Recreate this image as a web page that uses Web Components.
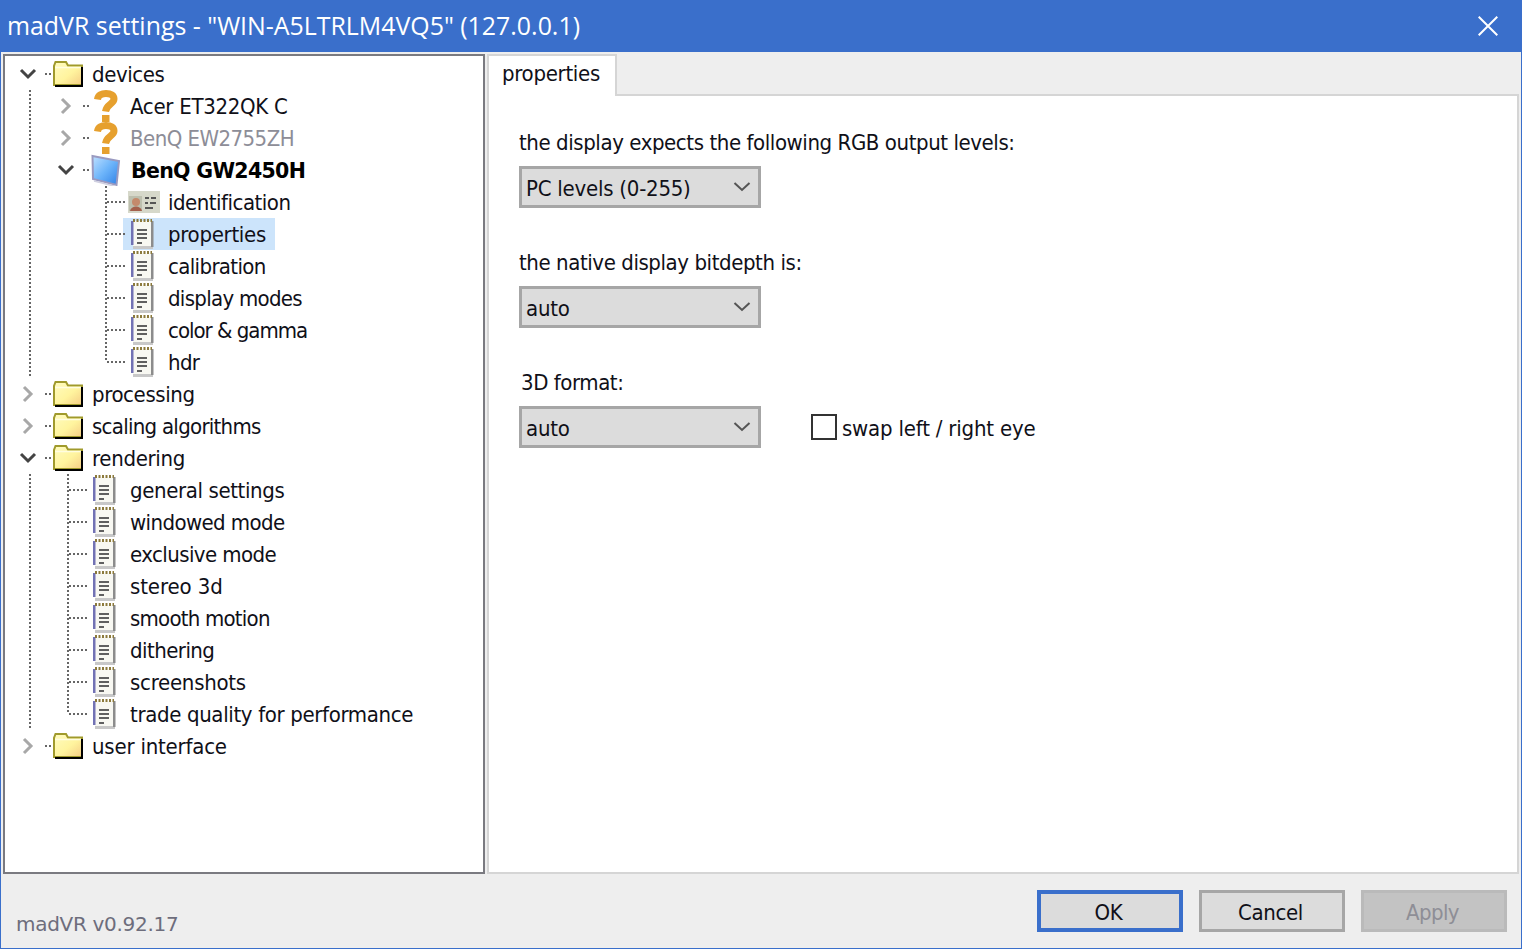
<!DOCTYPE html>
<html><head><meta charset="utf-8"><title>madVR settings</title>
<style>
html,body{margin:0;padding:0;background:#eee;}
body{width:1522px;height:949px;overflow:hidden;font-family:"DejaVu Sans","Noto Sans",sans-serif;font-stretch:condensed;font-size:22px;color:#101018;}
</style></head><body>
<template id="t-icon-folder"><svg width="30" height="26" viewBox="0 0 30 26"><path d="M1 24 V5 L2.500 1 H13 L15 4.500 H29 V24Z" fill="url(#f)" stroke="#a09a2c" stroke-width="2"/><path d="M2 6.500H28" stroke="#fffde0" stroke-width="1.500"/><path d="M2 25H29V6" fill="none" stroke="#000" stroke-width="2"/><defs><linearGradient id="f" x1="0" y1="0" x2="1" y2="1"><stop offset="0" stop-color="#fffcc0"/><stop offset=".55" stop-color="#fff49e"/><stop offset="1" stop-color="#f4cc84"/></linearGradient></defs></svg></template>
<template id="t-icon-q"><svg width="26" height="32" viewBox="0 0 26 32"><path d="M4.500 9.500 C5 5 9 3.500 13 3.500 C18 3.500 21 5.500 21 9 C21 14 13.500 14 12.500 21.500" fill="none" stroke="#e6a02e" stroke-width="7"/><rect x="9" y="25" width="7.500" height="7" fill="#e6a02e"/></svg></template>
<template id="t-icon-mon"><svg width="30" height="32" viewBox="0 0 30 32"><path d="M1.500 2 L28 7 L25.500 31 L2 25Z" fill="url(#m)" stroke="#9a9ac0" stroke-width="2"/><path d="M3 27 L25 32.500" stroke="#cfcfe0" stroke-width="1.500"/><defs><linearGradient id="m" x1="0" y1="0" x2="1" y2="1"><stop offset="0" stop-color="#bfe0ff"/><stop offset=".5" stop-color="#6cb4fa"/><stop offset="1" stop-color="#2f80e6"/></linearGradient></defs></svg></template>
<template id="t-icon-note"><svg width="26" height="32" viewBox="0 0 26 32"><rect x="2" y="28" width="20" height="3" fill="#c8c8c8"/><rect x="20" y="3" width="2.500" height="26" fill="#8c8c8c"/><rect x="2" y="3" width="18" height="25" fill="#f8f8f2"/><rect x="0" y="3" width="2.500" height="24" fill="#7272b4"/><path d="M2 2.500H21" stroke="#8c7a3c" stroke-width="3" stroke-dasharray="2 1.500"/><path d="M6 12H16M6 16H16M6 20H16M6 25H11" stroke="#606060" stroke-width="2"/></svg></template>
<template id="t-icon-id"><svg width="32" height="22" viewBox="0 0 32 22" style="filter:blur(.4px)"><rect width="32" height="22" fill="#d6d8ca"/><rect x="1" y="5" width="13" height="15" fill="#bcbfae"/><circle cx="8" cy="11" r="4" fill="#c48a6c"/><path d="M2 20 C3 14 13 14 14 20Z" fill="#a4604c"/><path d="M17 7h4M23 7h5M17 12h3M22 12h6M17 17h8" stroke="#555" stroke-width="2"/></svg></template>

<template id="t-tree-row"><style>
:host{display:flex;height:32px;position:relative;align-items:stretch;}
.c{width:38px;flex:none;position:relative;height:32px;}
.v{position:absolute;left:18px;top:0;bottom:0;width:2px;background:repeating-linear-gradient(to bottom,#666 0 2px,transparent 2px 4px);}
.v.half{bottom:16px;}
.v.tail{bottom:2px;}
.h{position:absolute;left:20px;width:20px;top:15px;height:2px;background:repeating-linear-gradient(to right,#666 0 2px,transparent 2px 4px);}
.s{position:absolute;left:34px;width:6px;top:15px;height:2px;background:repeating-linear-gradient(to right,#666 0 2px,transparent 2px 4px);}
.chev{position:absolute;left:8px;top:7px;width:18px;height:18px;}
.ico{width:38px;flex:none;display:flex;align-items:center;justify-content:center;height:32px;}
.lab{display:block;line-height:32px;padding:0 9px 0 5px;white-space:nowrap;position:relative;top:1px;}
.sel{display:flex;align-items:stretch;margin-left:-2px;padding-left:2px;}
:host([sel]) .sel{background:#cce4fb;}
:host([dim]) .lab{color:#8d8d97;}
:host([bold]) .lab{font-stretch:normal;font-weight:700;font-size:20.500px;letter-spacing:-.68px;color:#000;left:1px;}
</style><span id="g" style="display:contents"></span><span class="sel"><span class="ico" id="i"></span><span class="lab"><slot></slot></span></span></template>

<template id="t-combo"><style>
:host{display:flex;align-items:center;width:242px;height:42px;box-sizing:border-box;border:3px solid #a6a6a6;background:#dcdcdc;padding:0 7px 0 4px;justify-content:space-between;}
svg{flex:none}
span{position:relative;top:1px}
</style><span><slot></slot></span><svg width="18" height="12" viewBox="0 0 18 12"><path d="M1.500 2 L9 9 L16.500 2" fill="none" stroke="#555" stroke-width="2"/></svg></template>

<template id="t-btn"><style>
:host{display:flex;align-items:center;justify-content:center;width:146px;height:42px;box-sizing:border-box;border:3px solid #a6a6a6;background:#dcdcdc;padding-right:3px;}
:host([def]){border:4px solid #3a6fcb;}
:host([off]){background:#c3c3c3;border-color:#bababa;color:#8e8e96;}
span{position:relative;top:1px}
</style><span><slot></slot></span></template>

<template id="t-field"><style>
:host{display:block;height:120px;}
.l{display:block;line-height:32px;height:32px;margin-left:var(--ll,0);position:relative;top:1px;margin-bottom:8px}
.r{display:flex;align-items:center;gap:50px;}
</style><span class="l"><slot name="label"></slot></span><div class="r"><slot></slot></div></template>

<template id="t-check"><style>
:host{display:flex;align-items:center;gap:5px;}
i{display:block;width:26px;height:26px;box-sizing:border-box;border:2px solid #333;background:#fff;}
span{position:relative;top:1px}
</style><i></i><span><slot></slot></span></template>

<template id="t-title"><style>
:host{display:flex;flex:none;height:52px;background:#3a6fcb;color:#fff;align-items:center;justify-content:space-between;padding:0 23px 0 6px;font-family:"Open Sans","Noto Sans",sans-serif;font-stretch:normal;font-size:24.900px;}
span{position:relative;top:-1px;}
svg{display:block}
</style><span><slot></slot></span><svg width="20" height="20" viewBox="0 0 20 20"><path d="M0.700 0.700L19.300 19.300M19.300 0.700L0.700 19.300" stroke="#fff" stroke-width="2"/></svg></template>

<template id="t-window"><style>
:host{display:flex;flex-direction:column;width:1522px;height:949px;box-sizing:border-box;border:1px solid #3a6fcb;border-top:0;background:#eee;}
.main{display:flex;flex:none;gap:2px;height:820px;padding:2px 1px 0 2px;}
.foot{display:flex;flex:1;align-items:flex-start;justify-content:space-between;padding:16px 14px 0 15px;}
</style><slot name="title"></slot><div class="main"><slot name="tree"></slot><slot name="tabs"></slot></div><div class="foot"><slot name="version"></slot><slot name="buttons"></slot></div></template>

<template id="t-tree"><style>
:host{display:block;flex:none;width:482px;height:820px;box-sizing:border-box;border:2px solid #7a7a80;background:#fff;padding:2px 0 0 6px;overflow:hidden;}
</style><slot></slot></template>

<template id="t-tabs"><style>
:host{display:flex;flex-direction:column;flex:none;width:1032px;height:820px;}
.tab{display:block;width:130px;height:42px;box-sizing:border-box;flex:none;background:#fff;border:2px solid #d5d5d5;border-bottom:0;line-height:36px;padding-left:13px;position:relative;z-index:1;margin-bottom:-2px;}
.body{flex:1;background:#fff;border:2px solid #d5d5d5;padding:30px 0 0 30px;}
</style><span class="tab"><slot name="tab"></slot></span><div class="body"><slot></slot></div></template>

<template id="t-btns"><style>:host{display:flex;gap:16px;}</style><slot></slot></template>
<template id="t-ver"><style>:host{display:block;margin-top:18px;font-stretch:normal;font-size:20px;letter-spacing:-.3px;color:#6d6d7c;line-height:32px;}</style><slot></slot></template>

<script>
function simple(tag,tid){
  customElements.define(tag,class extends HTMLElement{
    constructor(){super();const r=this.attachShadow({mode:"open"});r.appendChild(document.getElementById(tid).content.cloneNode(true));}
  });
}
["window","title","tree","tabs","combo","btn","field","check","btns","ver"].forEach(n=>simple("mv-"+n,"t-"+n));
const CH={open:'<svg class="chev" viewBox="0 0 18 18"><path d="M2 5L9 12L16 5" fill="none" stroke="#444" stroke-width="3"/></svg>',
closed:'<svg class="chev" viewBox="0 0 18 18"><path d="M5 2L12 9L5 16" fill="none" stroke="#a8a8a8" stroke-width="3"/></svg>'};
customElements.define("mv-row",class extends HTMLElement{
  constructor(){super();const r=this.attachShadow({mode:"open"});r.appendChild(document.getElementById("t-tree-row").content.cloneNode(true));}
  connectedCallback(){
    const r=this.shadowRoot,g=r.getElementById("g");
    if(g.childNodes.length)return;
    (this.getAttribute("guides")||"").split(" ").filter(Boolean).forEach(tok=>{
      const c=document.createElement("span");c.className="c";
      let h="";
      if(tok==="v")h='<span class="v"></span>';
      if(tok==="t")h='<span class="v tail"></span>';
      if(tok==="b")h='<span class="v"></span><span class="h"></span>';
      if(tok==="l")h='<span class="v half"></span><span class="h"></span>';
      if(tok==="o")h=CH.open+'<span class="s"></span>';
      if(tok==="c")h=CH.closed+'<span class="s"></span>';
      c.innerHTML=h;g.appendChild(c);
    });
    const t=document.getElementById("t-icon-"+this.getAttribute("icon"));
    r.getElementById("i").appendChild(t.content.cloneNode(true));
  }
});
</script>

<mv-window>
<mv-title slot="title">madVR settings - "WIN-A5LTRLM4VQ5" (127.0.0.1)</mv-title>
<mv-tree slot="tree">
<mv-row guides="o" icon="folder" style="letter-spacing:-.43px">devices</mv-row>
<mv-row guides="v c" icon="q" style="letter-spacing:-.29px">Acer ET322QK C</mv-row>
<mv-row guides="v c" icon="q" dim style="letter-spacing:-.54px">BenQ EW2755ZH</mv-row>
<mv-row guides="v o" icon="mon" bold>BenQ GW2450H</mv-row>
<mv-row guides="v e b" icon="id" style="letter-spacing:-.5px">identification</mv-row>
<mv-row guides="v e b" icon="note" sel style="letter-spacing:-.3px">properties</mv-row>
<mv-row guides="v e b" icon="note" style="letter-spacing:-.64px">calibration</mv-row>
<mv-row guides="v e b" icon="note" style="letter-spacing:-.7px">display modes</mv-row>
<mv-row guides="v e b" icon="note" style="letter-spacing:-1px">color &amp; gamma</mv-row>
<mv-row guides="t e l" icon="note" style="letter-spacing:-.66px">hdr</mv-row>
<mv-row guides="c" icon="folder" style="letter-spacing:-.4px">processing</mv-row>
<mv-row guides="c" icon="folder" style="letter-spacing:-.72px">scaling algorithms</mv-row>
<mv-row guides="o" icon="folder" style="letter-spacing:-.33px">rendering</mv-row>
<mv-row guides="v b" icon="note" style="letter-spacing:-.38px">general settings</mv-row>
<mv-row guides="v b" icon="note" style="letter-spacing:-.6px">windowed mode</mv-row>
<mv-row guides="v b" icon="note" style="letter-spacing:-.57px">exclusive mode</mv-row>
<mv-row guides="v b" icon="note" style="letter-spacing:-.1px">stereo 3d</mv-row>
<mv-row guides="v b" icon="note" style="letter-spacing:-.77px">smooth motion</mv-row>
<mv-row guides="v b" icon="note" style="letter-spacing:-.55px">dithering</mv-row>
<mv-row guides="v b" icon="note" style="letter-spacing:-.27px">screenshots</mv-row>
<mv-row guides="t l" icon="note" style="letter-spacing:-.35px">trade quality for performance</mv-row>
<mv-row guides="c" icon="folder" style="letter-spacing:-.21px">user interface</mv-row>
</mv-tree>
<mv-tabs slot="tabs">
<span slot="tab" style="letter-spacing:-.3px">properties</span>
<mv-field><span slot="label" style="letter-spacing:-.42px">the display expects the following RGB output levels:</span><mv-combo style="letter-spacing:-.24px">PC levels (0-255)</mv-combo></mv-field>
<mv-field><span slot="label" style="letter-spacing:-.42px">the native display bitdepth is:</span><mv-combo style="letter-spacing:-.25px">auto</mv-combo></mv-field>
<mv-field style="--ll:2px"><span slot="label" style="letter-spacing:-.44px">3D format:</span><mv-combo style="letter-spacing:-.25px">auto</mv-combo><mv-check style="letter-spacing:-.2px">swap left / right eye</mv-check></mv-field>
</mv-tabs>
<mv-ver slot="version">madVR v0.92.17</mv-ver>
<mv-btns slot="buttons"><mv-btn def style="letter-spacing:-.3px">OK</mv-btn><mv-btn style="letter-spacing:-.33px">Cancel</mv-btn><mv-btn off style="letter-spacing:-.6px">Apply</mv-btn></mv-btns>
</mv-window>
</body></html>
